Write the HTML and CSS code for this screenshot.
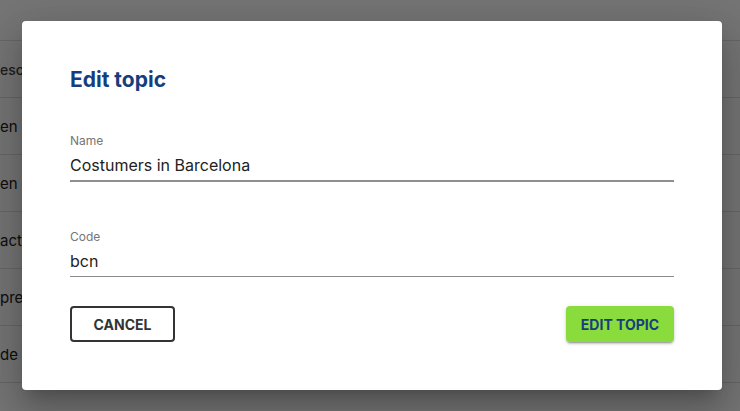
FILE: index.html
```html
<!DOCTYPE html>
<html>
<head>
<meta charset="utf-8">
<link rel="stylesheet" href="styles.css">
</head>
<body>
<div class="page">
  <div class="table">
    <div class="row head"><span>escr</span></div>
    <div class="row"><span>en <b class="lnk">B</b></span></div>
    <div class="row"><span>en <b class="lnk">M</b></span></div>
    <div class="row"><span>activ</span></div>
    <div class="row"><span>pren</span></div>
    <div class="row"><span>de 1</span></div>
  </div>
</div>
<div class="backdrop">
  <div class="dialog">
    <h2 class="title">Edit topic</h2>
    <div class="field">
      <label class="label">Name</label>
      <div class="input thick">Costumers in Barcelona</div>
    </div>
    <div class="field second">
      <label class="label">Code</label>
      <div class="input">bcn</div>
    </div>
    <div class="actions">
      <button class="btn cancel">CANCEL</button>
      <button class="btn primary">EDIT TOPIC</button>
    </div>
  </div>
</div>
</body>
</html>
```
FILE: styles.css
```css
* { box-sizing: border-box; }
html, body { margin: 0; padding: 0; }
body {
  width: 740px;
  height: 411px;
  overflow: hidden;
  font-family: Inter, Roboto, "Liberation Sans", sans-serif;
  background: #fff;
  position: relative;
}
.page { padding-top: 40px; }
.table {
  width: 740px;
  border-top: 1px solid #e0e0e0;
}
.row {
  height: 57px;
  border-bottom: 1px solid #e0e0e0;
  display: flex;
  align-items: center;
  font-size: 15px;
  color: #222;
}
.row span { white-space: nowrap; }
.row.head { color: #444; font-weight: 500; font-size: 14px; }
.lnk { font-weight: 400; color: #1b3f7e; }
.backdrop {
  position: absolute;
  inset: 0;
  background: rgba(0,0,0,0.54);
  display: flex;
  align-items: flex-start;
  justify-content: flex-start;
  padding: 21px 0 0 22px;
}
.dialog {
  width: 700px;
  height: 369px;
  background: #fff;
  border-radius: 4px;
  box-shadow: 0 11px 15px -7px rgba(0,0,0,0.2), 0 24px 38px 3px rgba(0,0,0,0.14), 0 9px 46px 8px rgba(0,0,0,0.12);
  padding: 43px 48px 48px;
  display: flex;
  flex-direction: column;
}
.title {
  margin: 0;
  font-size: 21px;
  line-height: 32px;
  font-weight: 700;
  color: #173e7c;
}
.field { margin-top: 37px; display: flex; flex-direction: column; }
.field.second { margin-top: 47px; }
.label {
  font-size: 12px;
  line-height: 16px;
  color: #757575;
}
.input {
  margin-top: 4px;
  font-size: 16px;
  line-height: 24px;
  color: #222;
  padding-bottom: 3px;
  border-bottom: 1px solid #8a8a8a;
}
.input.thick { border-bottom: 2px solid #8e8e8e; padding-bottom: 3px; }
.actions {
  margin-top: auto;
  display: flex;
  justify-content: space-between;
  align-items: center;
}
.btn {
  font-family: Inter, Roboto, "Liberation Sans", sans-serif;
  font-size: 14px;
  font-weight: 700;
  height: 36px;
  border-radius: 4px;
  cursor: pointer;
}
.cancel {
  width: 105px;
  background: #fff;
  border: 2px solid #333;
  color: #333;
}
.primary {
  width: 108px;
  background: #89dc3c;
  border: none;
  color: #173e7c;
  box-shadow: 0 3px 1px -2px rgba(0,0,0,0.2), 0 2px 2px 0 rgba(0,0,0,0.14), 0 1px 5px 0 rgba(0,0,0,0.12);
}
```
